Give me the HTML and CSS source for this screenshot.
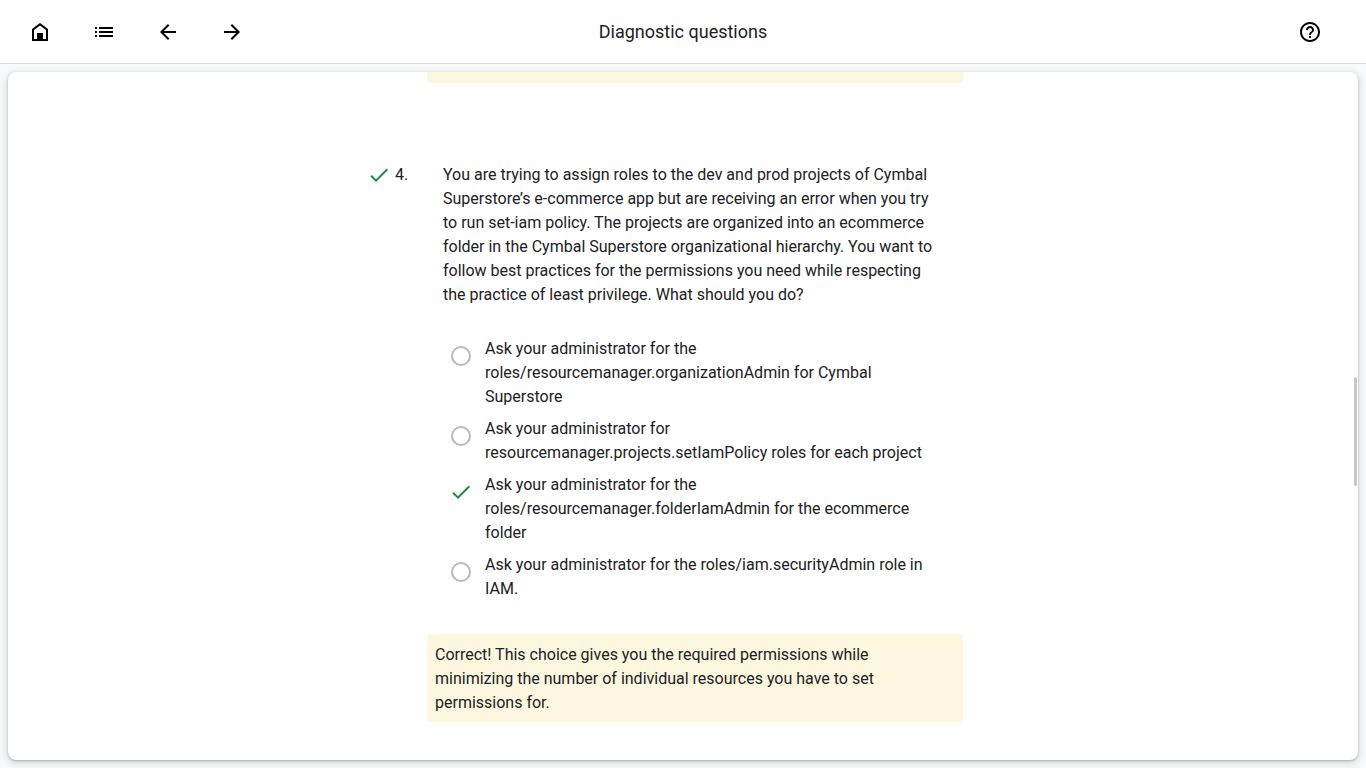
FILE: index.html
```html
<!DOCTYPE html>
<html lang="en">
<head>
<meta charset="utf-8">
<meta name="viewport" content="width=device-width, initial-scale=1">
<title>Diagnostic questions</title>
<link rel="stylesheet" href="styles.css">
</head>
<body>
<header class="topbar">
  <nav class="topbar-side" aria-label="Course">
    <button class="icon-button" type="button" aria-label="Home">
      <svg class="icon" viewBox="0 0 24 24"><path fill-rule="evenodd" d="M4 9 12 3l8 6v12H4V9Zm2 1v9h12v-9l-6-4.5L6 10Z"/><path d="M9 13h6v7H9z"/></svg>
    </button>
    <button class="icon-button" type="button" aria-label="Contents">
      <svg class="icon" viewBox="0 0 24 24"><path d="M7 7h14v2H7zM7 11h14v2H7zM7 15h14v2H7zM3 7h2v2H3zM3 11h2v2H3zM3 15h2v2H3z"/></svg>
    </button>
    <button class="icon-button" type="button" aria-label="Previous">
      <svg class="icon" viewBox="0 0 24 24"><path d="M20 11H7.83l5.59-5.59L12 4l-8 8 8 8 1.41-1.41L7.83 13H20v-2z"/></svg>
    </button>
    <button class="icon-button" type="button" aria-label="Next">
      <svg class="icon" viewBox="0 0 24 24"><path d="m12 4-1.41 1.41L16.17 11H4v2h12.17l-5.58 5.59L12 20l8-8z"/></svg>
    </button>
  </nav>
  <h1 class="title">Diagnostic questions</h1>
  <div class="topbar-side topbar-end">
    <button class="icon-button" type="button" aria-label="Help">
      <svg class="icon" viewBox="0 0 24 24"><path d="M11 18h2v-2h-2v2zm1-16C6.48 2 2 6.48 2 12s4.48 10 10 10 10-4.48 10-10S17.52 2 12 2zm0 18c-4.41 0-8-3.59-8-8s3.59-8 8-8 8 3.59 8 8-3.59 8-8 8zm0-14c-2.21 0-4 1.79-4 4h2c0-1.1.9-2 2-2s2 .9 2 2c0 2-3 1.75-3 5h2c0-2.25 3-2.5 3-5 0-2.21-1.79-4-4-4z"/></svg>
    </button>
  </div>
</header>
<main class="card">
  <div class="quiz">
    <div class="feedback feedback-end"></div>
    <section class="question">
      <svg class="check" viewBox="0 0 24 24" role="img" aria-label="Correct"><path d="M9 16.17 4.83 12l-1.42 1.41L9 19 21 7l-1.41-1.41z"/></svg>
      <span class="number">4.</span>
      <fieldset class="body">
        <legend class="prompt">You are trying to assign roles to the dev and prod projects of Cymbal Superstore’s e-commerce app but are receiving an error when you try to run set-iam policy. The projects are organized into an ecommerce folder in the Cymbal Superstore organizational hierarchy. You want to follow best practices for the permissions you need while respecting the practice of least privilege. What should you do?</legend>
        <div class="options">
          <label class="option"><input class="radio" type="radio" name="q4"><span>Ask your administrator for the roles/resourcemanager.organizationAdmin for Cymbal Superstore</span></label>
          <label class="option"><input class="radio" type="radio" name="q4"><span>Ask your administrator for resourcemanager.projects.setIamPolicy roles for each project</span></label>
          <label class="option"><input class="radio" type="radio" name="q4" checked><svg class="option-check" viewBox="0 0 24 24" aria-hidden="true"><path d="M9 16.17 4.83 12l-1.42 1.41L9 19 21 7l-1.41-1.41z"/></svg><span>Ask your administrator for the roles/resourcemanager.folderIamAdmin for the ecommerce folder</span></label>
          <label class="option"><input class="radio" type="radio" name="q4"><span>Ask your administrator for the roles/iam.securityAdmin role in IAM.</span></label>
        </div>
      </fieldset>
    </section>
    <p class="feedback">Correct! This choice gives you the required permissions while minimizing the number of individual resources you have to set permissions for.</p>
  </div>
  <div class="scroll-thumb"></div>
</main>
</body>
</html>
```
FILE: styles.css
```css
* {
  box-sizing: border-box;
}

body {
  display: flex;
  flex-direction: column;
  height: 100vh;
  margin: 0;
  background: #f8f9fa;
  color: #202124;
  font: 16px/24px Roboto, sans-serif;
}

.topbar {
  display: flex;
  align-items: center;
  flex: none;
  height: 64px;
  padding: 0 16px;
  background: #fff;
  border-bottom: 1px solid #dadce0;
}

.topbar-side {
  display: flex;
  flex: 1;
  gap: 16px;
}

.topbar-end {
  justify-content: flex-end;
}

.icon-button {
  display: flex;
  align-items: center;
  justify-content: center;
  width: 48px;
  height: 48px;
  padding: 0;
  border: 0;
  background: none;
  color: #000;
}

.icon {
  width: 24px;
  height: 24px;
  fill: currentColor;
}

.topbar-end .icon-button {
  margin-right: 16px;
}

.title {
  margin: 0;
  font-size: 18px;
  font-weight: 400;
  line-height: 24px;
}

.card {
  position: relative;
  flex: 1;
  min-height: 0;
  margin: 8px;
  overflow: hidden;
  background: #fff;
  border-radius: 8px;
  box-shadow: 0 1px 2px rgba(60, 64, 67, 0.3), 0 2px 6px 2px rgba(60, 64, 67, 0.15);
}

.quiz {
  max-width: 632px;
  margin: 0 auto;
}

.feedback {
  margin: 33px 36px 0 60px;
  padding: 9px 16px 7px 8px;
  background: #fef7e0;
  border-radius: 4px;
}

.feedback-end {
  height: 11px;
  margin-top: 0;
  margin-bottom: 80px;
  padding: 0;
  border-radius: 0 0 4px 4px;
}

.question {
  display: flex;
  align-items: flex-start;
  padding-right: 60px;
}

.check {
  flex: none;
  width: 24px;
  height: 24px;
  margin-right: 4px;
}

.check,
.option-check {
  fill: #1e8e3e;
}

.number {
  flex: none;
  width: 48px;
}

.body {
  flex: 1;
  min-width: 0;
  margin: 0;
  padding: 0;
  border: 0;
}

.prompt {
  padding: 0;
}

.options {
  display: grid;
  gap: 8px;
  padding: 30px 0 0 8px;
}

.option {
  position: relative;
  display: flex;
  align-items: flex-start;
  gap: 14px;
}

.radio {
  appearance: none;
  flex: none;
  width: 20px;
  height: 20px;
  margin: 9px 0 0;
  border: 2px solid #b8b8b8;
  border-radius: 50%;
}

.radio:checked {
  border-color: transparent;
}

.option-check {
  position: absolute;
  top: 7px;
  left: -2px;
  width: 24px;
  height: 24px;
}

.scroll-thumb {
  position: absolute;
  top: 305px;
  right: 1px;
  width: 3px;
  height: 109px;
  background: #c8c8c8;
  border-radius: 2px;
}
```
